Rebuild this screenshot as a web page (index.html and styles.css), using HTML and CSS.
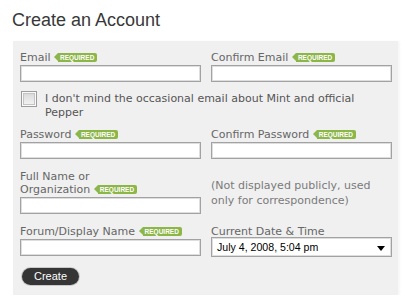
FILE: index.html
```html
<!DOCTYPE html>
<html lang="en">
<head>
    <meta charset="UTF-8">
    <meta name="viewport" content="width=device-width, initial-scale=1.0">
    <title>Create an Account</title>
    <link rel="stylesheet" href="styles.css">
</head>
<body>

<h1 class="page-title">Create an Account</h1>

<form class="account-form" onsubmit="return false">
    <div class="field">
        <label for="email">Email <span class="req">Required</span></label>
        <input type="text" id="email" class="text">
    </div>
    <div class="field">
        <label for="email2">Confirm Email <span class="req">Required</span></label>
        <input type="text" id="email2" class="text">
    </div>

    <div class="check-row">
        <input type="checkbox" id="optin" class="check">
        <label for="optin">I don't mind the occasional email about Mint and official Pepper</label>
    </div>

    <div class="field">
        <label for="pass">Password <span class="req">Required</span></label>
        <input type="password" id="pass" class="text">
    </div>
    <div class="field">
        <label for="pass2">Confirm Password <span class="req">Required</span></label>
        <input type="password" id="pass2" class="text">
    </div>

    <div class="field">
        <label for="fullname">Full Name or <span class="nowrap">Organization <span class="req">Required</span></span></label>
        <input type="text" id="fullname" class="text">
    </div>
    <p class="note">(Not displayed publicly, used only for correspondence)</p>

    <div class="field">
        <label for="forum">Forum/Display Name <span class="req">Required</span></label>
        <input type="text" id="forum" class="text">
    </div>
    <div class="field">
        <label for="when">Current Date &amp; Time</label>
        <div class="select-wrap">
            <select id="when">
                <option>July 4, 2008, 5:04 pm</option>
            </select>
            <!-- little down arrow drawn over the select -->
            <svg class="select-arrow" width="8" height="5" viewBox="0 0 8 5"><path d="M0 0H8L4 5Z" fill="#000"/></svg>
        </div>
    </div>

    <div class="actions">
        <button type="submit" class="btn">Create</button>
    </div>
</form>

</body>
</html>
```

FILE: styles.css
```css
body {
    margin: 0;
    padding: 9px 12px 0 12px;
    background: #fff;
    font-family: "DejaVu Sans", Verdana, sans-serif;
    font-size: 11px;
    color: #666;
}
.page-title {
    margin: 0 0 10px 0;
    font-family: "Liberation Sans", Arial, sans-serif;
    font-size: 18px;
    font-weight: normal;
    line-height: 22px;
    color: #383838;
}
.account-form {
    display: grid;
    grid-template-columns: 1fr 1fr;
    column-gap: 10px;
    row-gap: 11px;
    width: 372px;
    margin-left: 1px;
    padding: 10px 6px 10px 7px;
    background: #f0f0f0;
    box-shadow: 2px 0 2px #f7f7f7;
}
.field label {
    display: block;
    line-height: 13px;
    margin-bottom: 1px;
}
.nowrap {
    white-space: nowrap;
}
.req {
    display: inline-block;
    position: relative;
    margin-left: 4px;
    padding: 0 3px 0 2px;
    height: 9px;
    line-height: 9px;
    font-family: "Liberation Sans", Arial, sans-serif;
    font-size: 6.5px;
    font-weight: bold;
    text-transform: uppercase;
    color: #fff;
    background: #8cb648;
    border-radius: 0 2px 2px 0;
    vertical-align: 1px;
}
.req::before {
    content: "";
    position: absolute;
    left: -4px;
    top: 0;
    border-style: solid;
    border-width: 4.5px 4px 4.5px 0;
    border-color: transparent #8cb648 transparent transparent;
}
.text {
    display: block;
    box-sizing: border-box;
    width: 100%;
    height: 17px;
    margin: 0;
    padding: 0 3px;
    border: 1px solid #a2a2a2;
    box-shadow: inset 0 0 0 1px #dedede;
    background: #fff;
    outline: none;
}
.check-row {
    grid-column: 1 / -1;
    display: flex;
    align-items: flex-start;
    margin: -2px 0 -3px 0;
}
.check {
    appearance: none;
    -webkit-appearance: none;
    flex: none;
    width: 16px;
    height: 16px;
    margin: 0 8px 0 1px;
    border: 1px solid #9c9c9c;
    box-shadow: inset 0 0 0 1px #fafafa, inset 0 0 0 2px #c4c4c4;
    background: linear-gradient(#d6d6d6, #f6f6f6);
}
.check-row label {
    max-width: 335px;
    padding-top: 1px;
    line-height: 14px;
    color: #555;
}
.note {
    margin: 0;
    padding-top: 8px;
    line-height: 15px;
    color: #7a7a7a;
}
.select-wrap {
    position: relative;
    margin-top: -2px;
}
.select-wrap select {
    appearance: none;
    -webkit-appearance: none;
    display: block;
    box-sizing: border-box;
    width: 100%;
    height: 20px;
    margin: 0;
    padding: 0 0 0 5px;
    border: 1px solid #a2a2a2;
    box-shadow: inset 0 0 0 1px #dedede;
    border-radius: 0;
    background: #fff;
    font-family: "Liberation Sans", Arial, sans-serif;
    font-size: 10.6px;
    color: #000;
}
.select-arrow {
    position: absolute;
    right: 7px;
    top: 9px;
}
.actions {
    grid-column: 1 / -1;
}
.btn {
    display: block;
    width: 57px;
    height: 17px;
    margin: 0 0 0 2px;
    padding: 0;
    border: none;
    border-radius: 9px;
    background: #353535;
    box-shadow: 0 0 0 1px #c9c9c9;
    font-family: "Liberation Sans Narrow", "Liberation Sans", Arial, sans-serif;
    font-size: 11px;
    line-height: 17px;
    color: #fff;
    cursor: pointer;
}
```
